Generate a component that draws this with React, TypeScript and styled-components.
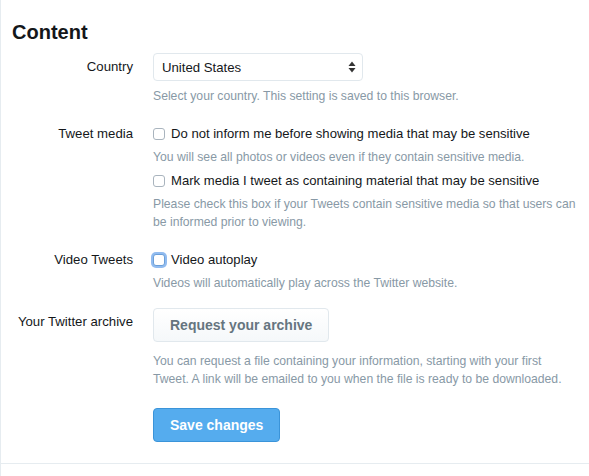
import React from "react";
import styled, { createGlobalStyle } from "styled-components";

const Global = createGlobalStyle`
  html, body { margin: 0; padding: 0; background: #fff; }
  body { font-family: "Liberation Sans", Arial, sans-serif; color: #14171a; }
  * { box-sizing: border-box; }
`;

const Page = styled.div`
  width: 589px;
  min-height: 100vh;
  border-left: 1px solid #e6ecf0;
`;

const Panel = styled.section`
  border-bottom: 1px solid #e6ecf0;
  padding: 20px 0 21px 0;
`;

const Heading = styled.h2`
  margin: 0 0 9px 11px;
  font-size: 20px;
  line-height: 24px;
  font-weight: 700;
  color: #14171a;
`;

const Row = styled.div<{ $mb?: number }>`
  display: grid;
  grid-template-columns: 132px 1fr;
  column-gap: 20px;
  margin-bottom: ${(p) => (p.$mb ?? 20)}px;
`;

const Label = styled.div<{ $pt?: number }>`
  text-align: right;
  font-size: 13.2px;
  line-height: 18px;
  color: #14171a;
  padding-top: ${(p) => p.$pt ?? 0}px;
`;

const Control = styled.div`
  display: flex;
  flex-direction: column;
  align-items: flex-start;
  width: 424px;
`;

const SelectWrap = styled.div`
  position: relative;
  width: 210px;
  height: 28px;
`;

const Select = styled.select`
  appearance: none;
  -webkit-appearance: none;
  width: 100%;
  height: 28px;
  border: 1px solid #e1e8ed;
  border-radius: 4px;
  background: #fff;
  padding: 0 24px 0 8px;
  font-family: "Liberation Sans", Arial, sans-serif;
  font-size: 13.2px;
  color: #14171a;
  outline: none;
`;

const Arrows = styled.svg`
  position: absolute;
  right: 7px;
  top: 8px;
  pointer-events: none;
`;

const Help = styled.div<{ $mt?: number }>`
  margin-top: ${(p) => p.$mt ?? 5}px;
  font-size: 12.2px;
  line-height: 18px;
  color: #8899a6;
`;

const ButtonSlot = styled.div`
  margin-top: 20px;
`;

const CheckLine = styled.label<{ $mt?: number }>`
  display: flex;
  align-items: center;
  gap: 6px;
  margin-top: ${(p) => p.$mt ?? 0}px;
  font-size: 13.1px;
  line-height: 18px;
  color: #14171a;
`;

const Box = styled.span<{ $focus?: boolean }>`
  display: inline-block;
  width: 12px;
  height: 12px;
  border: 1px solid ${(p) => (p.$focus ? "#6b9fd8" : "#a9b4be")};
  border-radius: 3px;
  background: #fff;
  box-shadow: ${(p) => (p.$focus ? "0 0 0 2px rgba(110,165,235,0.75)" : "none")};
  flex: none;
`;

const GhostButton = styled.button`
  height: 34px;
  padding: 0 16px;
  border: 1px solid #e1e8ed;
  border-radius: 4px;
  background: linear-gradient(#fff, #f5f8fa);
  font-family: "Liberation Sans", Arial, sans-serif;
  font-size: 14px;
  font-weight: 700;
  color: #66757f;
`;

const PrimaryButton = styled.button`
  height: 34px;
  padding: 0 16px;
  border: 1px solid #3b94d9;
  border-radius: 4px;
  background: #55acee;
  font-family: "Liberation Sans", Arial, sans-serif;
  font-size: 14px;
  font-weight: 700;
  color: #fff;
`;

export default function App() {
  return (
    <>
      <Global />
      <Page>
        <Panel>
          <Heading>Content</Heading>
          <Row>
            <Label $pt={5}>Country</Label>
            <Control>
              <SelectWrap>
                <Select defaultValue="us">
                  <option value="us">United States</option>
                </Select>
                <Arrows width="8" height="12" viewBox="0 0 8 12">
                  <path d="M4 0.5 L7.5 5 L0.5 5 Z" fill="#333" />
                  <path d="M4 11.5 L7.5 7 L0.5 7 Z" fill="#333" />
                </Arrows>
              </SelectWrap>
              <Help $mt={6}>Select your country. This setting is saved to this browser.</Help>
            </Control>
          </Row>
          <Row>
            <Label>Tweet media</Label>
            <Control>
              <CheckLine>
                <Box />
                Do not inform me before showing media that may be sensitive
              </CheckLine>
              <Help>You will see all photos or videos even if they contain sensitive media.</Help>
              <CheckLine $mt={6}>
                <Box />
                Mark media I tweet as containing material that may be sensitive
              </CheckLine>
              <Help>
                Please check this box if your Tweets contain sensitive media so that users can be
                informed prior to viewing.
              </Help>
            </Control>
          </Row>
          <Row $mb={16}>
            <Label>Video Tweets</Label>
            <Control>
              <CheckLine>
                <Box $focus />
                Video autoplay
              </CheckLine>
              <Help>Videos will automatically play across the Twitter website.</Help>
            </Control>
          </Row>
          <Row $mb={0}>
            <Label $pt={5}>Your Twitter archive</Label>
            <Control>
              <GhostButton>Request your archive</GhostButton>
              <Help $mt={10}>
                You can request a file containing your information, starting with your first Tweet.
                A link will be emailed to you when the file is ready to be downloaded.
              </Help>
              <ButtonSlot>
                <PrimaryButton>Save changes</PrimaryButton>
              </ButtonSlot>
            </Control>
          </Row>
        </Panel>
      </Page>
    </>
  );
}
